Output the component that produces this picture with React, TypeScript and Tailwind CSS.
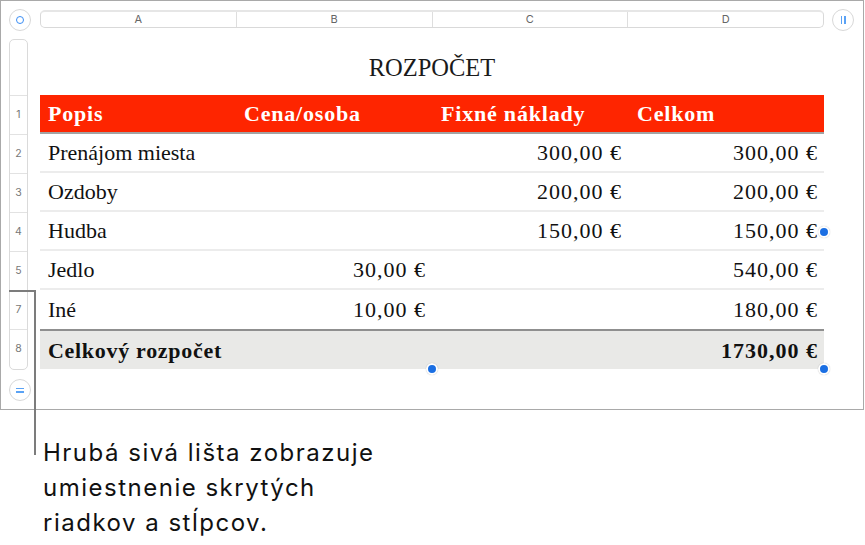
import React from "react";

const serif = { fontFamily: '"Liberation Serif", "Times New Roman", serif' };
const sans = { fontFamily: 'Inter, "Liberation Sans", Arial, sans-serif' };

type Row = { n: string; a: string; b: string; c: string; d: string };
const rows: Row[] = [
  { n: "2", a: "Prenájom miesta", b: "", c: "300,00 €", d: "300,00 €" },
  { n: "3", a: "Ozdoby", b: "", c: "200,00 €", d: "200,00 €" },
  { n: "4", a: "Hudba", b: "", c: "150,00 €", d: "150,00 €" },
  { n: "5", a: "Jedlo", b: "30,00 €", c: "", d: "540,00 €" },
  { n: "7", a: "Iné", b: "10,00 €", c: "", d: "180,00 €" },
];

function Dot({ className }: { className: string }) {
  return (
    <span
      className={
        "absolute w-[12px] h-[12px] rounded-full bg-[#1b6fe3] border-2 border-white shadow-[0_0_1px_rgba(0,0,0,0.3)] -translate-x-1/2 -translate-y-1/2 " +
        className
      }
    />
  );
}

export default function App() {
  return (
    <div className="relative w-[865px] h-[545px] bg-white overflow-hidden" style={sans}>
      {/* Frame */}
      <div className="w-[864px] h-[410px] border border-[#a9a9a9] bg-white">
        {/* top row */}
        <div className="flex items-start pt-[8px] pl-[8px]">
          <div className="w-[22px] h-[22px] rounded-full border border-[#d8d8d8] bg-white flex items-center justify-center">
            <span className="w-[8px] h-[8px] rounded-full border-[1.5px] border-[#3b8ef5]" />
          </div>
          <div className="ml-[9px] mt-[1px] w-[784px] h-[18px] rounded-[5px] border border-[#d9d9d9] border-t-2 border-t-[#e6e6e6] bg-white flex text-[11px] text-[#666]">
            {["A", "B", "C", "D"].map((l, i) => (
              <div
                key={l}
                className={
                  "flex-1 flex items-center justify-center leading-none " +
                  (i < 3 ? "border-r border-[#dedede]" : "")
                }
              >
                {l}
              </div>
            ))}
          </div>
          <div className="ml-[8px] w-[22px] h-[22px] rounded-full border border-[#d8d8d8] bg-white flex items-center justify-center gap-[2px]">
            <span className="w-[1.5px] h-[8px] bg-[#5aa2f5]" />
            <span className="w-[1.5px] h-[8px] bg-[#5aa2f5]" />
          </div>
        </div>

        {/* body */}
        <div className="flex items-start mt-[8px] pl-[8px]">
          {/* row header */}
          <div className="w-[19px] rounded-[5px] border border-[#dadada] bg-white flex flex-col text-[10.5px] text-[#777]">
            <div className="h-[55px]" />
            {["1", "2", "3", "4", "5", "7", "8"].map((n) => (
              <div
                key={n}
                className="h-[39px] border-t border-[#e2e2e2] flex items-center justify-center leading-none"
              >
                {n}
              </div>
            ))}
            <div className="h-[1px]" />
          </div>

          {/* table */}
          <div className="relative ml-[12px] w-[784px]" style={serif}>
            <div className="h-[56px] flex items-center justify-center pt-[2px] text-[24.5px] text-[#1a1a1a]">
              ROZPOČET
            </div>
            <div className="h-[39px] bg-[#fe2500] border-b-2 border-[#a3a3a3] grid grid-cols-4 items-center text-white font-bold text-[22px] tracking-[0.8px]">
              <div className="pl-[8px]">Popis</div>
              <div className="pl-[8px]">Cena/osoba</div>
              <div className="pl-[9px]">Fixné náklady</div>
              <div className="pl-[9px]">Celkom</div>
            </div>
            {rows.map((r, i) => (
              <div
                key={r.n}
                className={
                  "h-[39px] grid grid-cols-4 items-center text-[22px] text-[#111] " +
                  (i < rows.length - 1 ? "border-b-2 border-[#ececec]" : "")
                }
              >
                <div className="pl-[8px]">{r.a}</div>
                <div className="pr-[6px] text-right tracking-[1px]">{r.b}</div>
                <div className="pr-[6px] text-right tracking-[1px]">{r.c}</div>
                <div className="pr-[6px] text-right tracking-[1px]">{r.d}</div>
              </div>
            ))}
            <div className="h-[40px] bg-[#e9e9e7] border-t-2 border-[#8f8f8f] grid grid-cols-4 items-center text-[22px] font-bold text-[#111]">
              <div className="pl-[8px] col-span-2 tracking-[0.7px]">Celkový rozpočet</div>
              <div />
              <div className="pr-[6px] text-right tracking-[1px]">1730,00 €</div>
            </div>
            <Dot className="left-[784px] top-[193px]" />
            <Dot className="left-[392px] top-[330px]" />
            <Dot className="left-[784px] top-[330px]" />
          </div>
        </div>

        {/* bottom circle */}
        <div className="mt-[9px] ml-[8px] w-[22px] h-[22px] rounded-full border border-[#d8d8d8] bg-white flex flex-col items-center justify-center gap-[2px]">
          <span className="w-[8px] h-[1.5px] bg-[#5aa2f5]" />
          <span className="w-[8px] h-[1.5px] bg-[#5aa2f5]" />
        </div>
      </div>

      {/* callout lines */}
      <span className="absolute left-[9px] top-[290px] w-[27px] h-[2px] bg-[#7c7c7c]" />
      <span className="absolute left-[34px] top-[290px] w-[2px] h-[165px] bg-[#7c7c7c]" />

      {/* callout text */}
      <div className="mt-[25px] pl-[43px] text-[24px] leading-[35px] tracking-[1.5px] text-[#111]">
        Hrubá sivá lišta zobrazuje
        <br />
        umiestnenie skrytých
        <br />
        riadkov a stĺpcov.
      </div>
    </div>
  );
}
